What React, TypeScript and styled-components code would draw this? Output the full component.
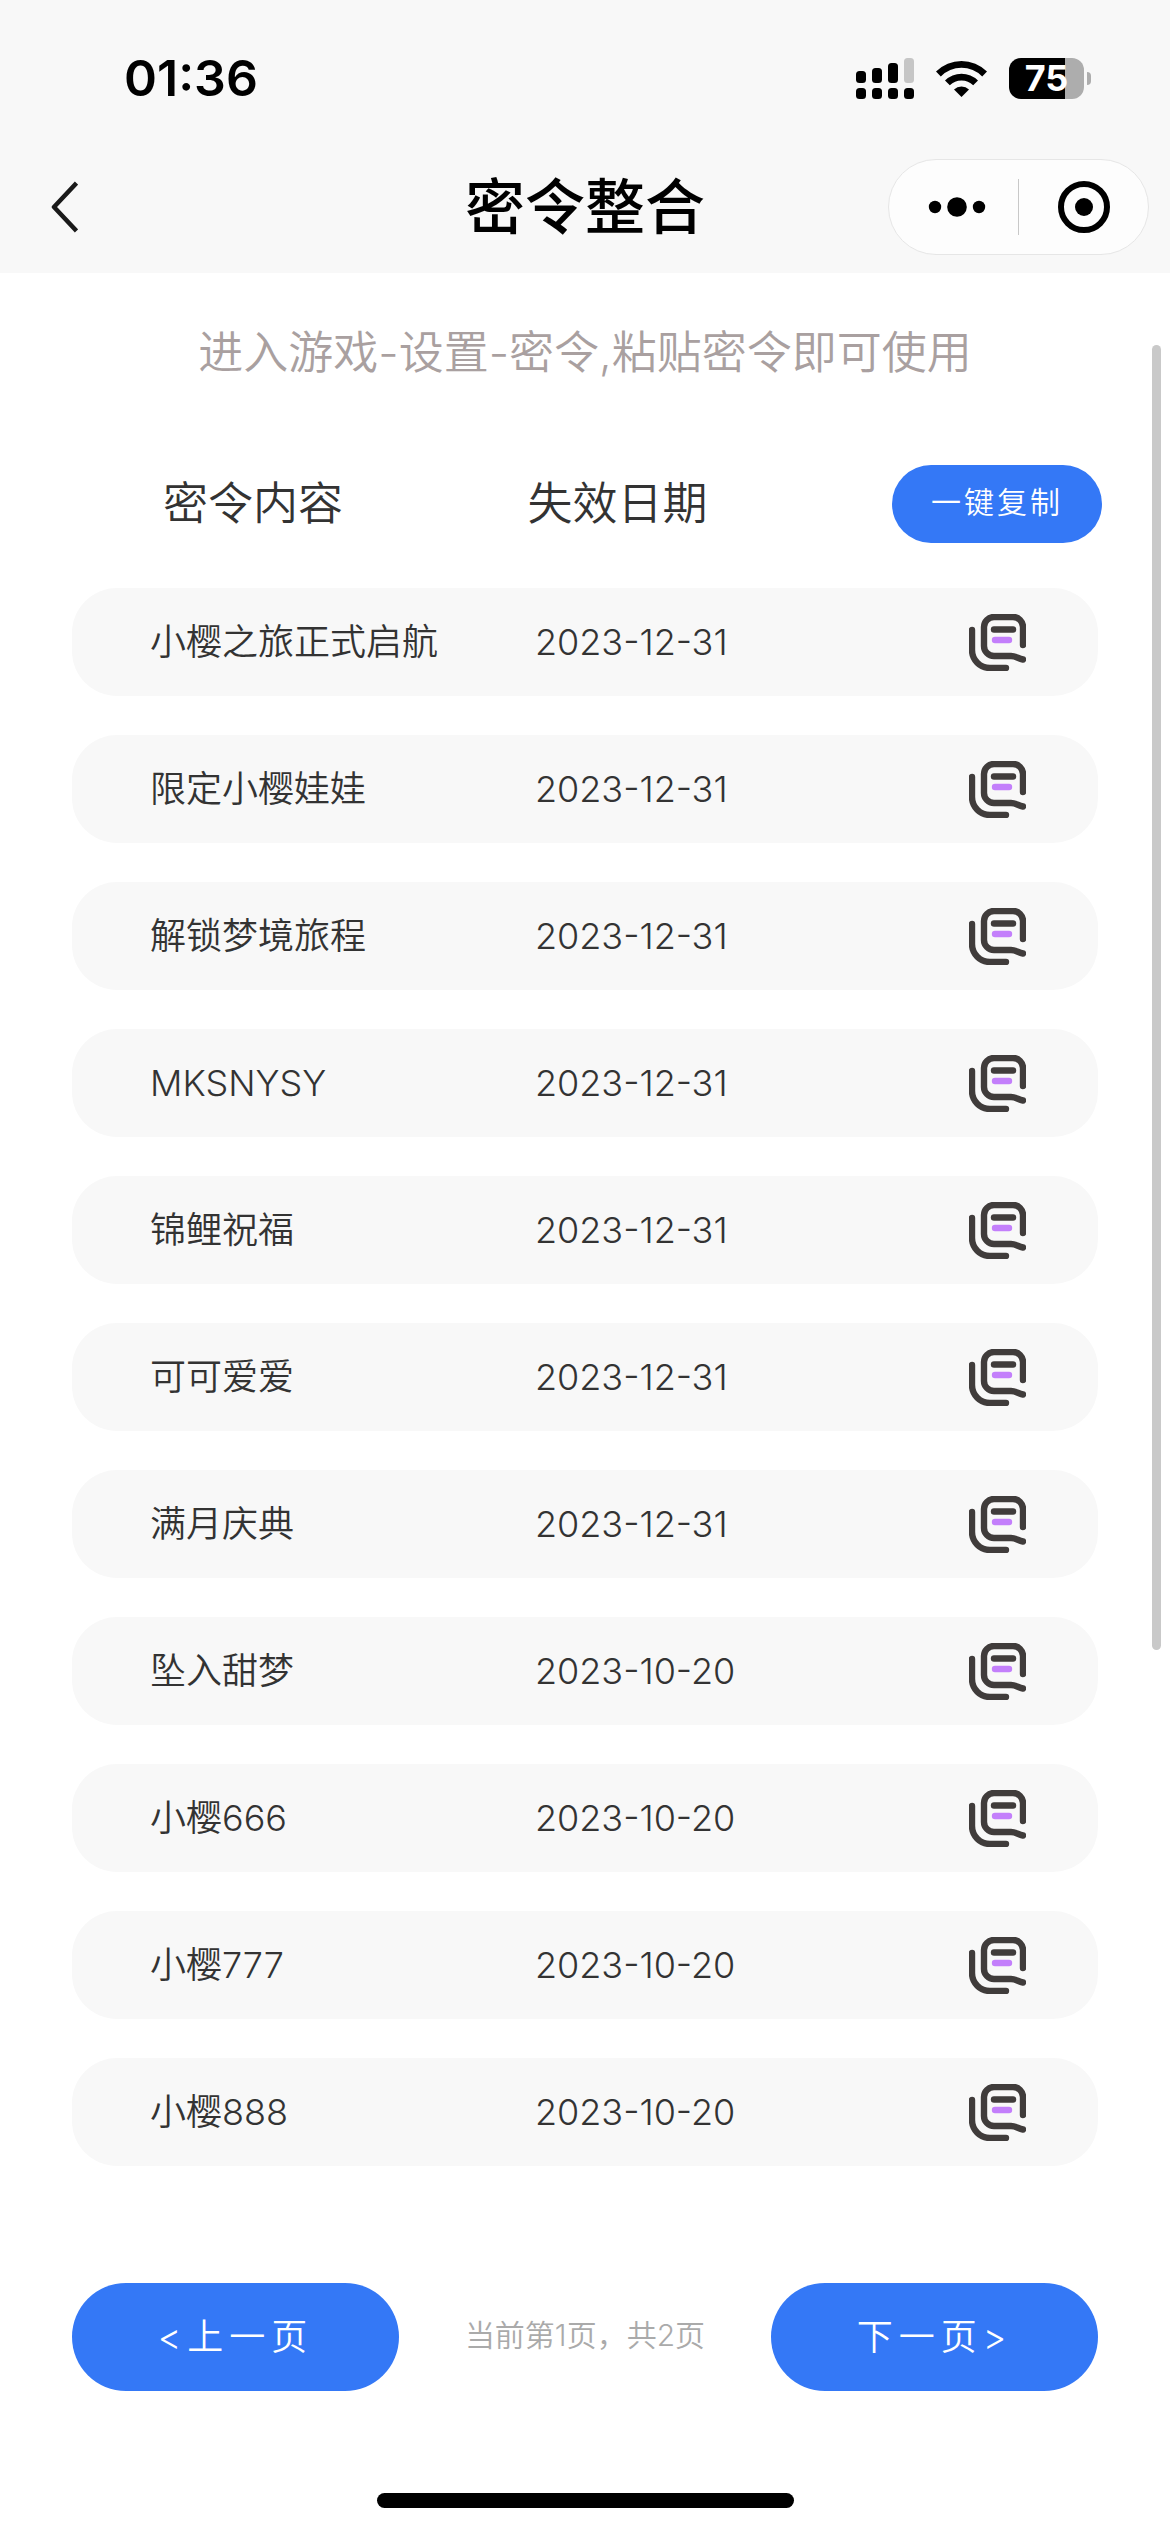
import React from "react";
import styled, { createGlobalStyle } from "styled-components";

const GlobalStyle = createGlobalStyle`
  *, *::before, *::after { box-sizing: border-box; }
  body {
    margin: 0;
    background: #fff;
    color: #333;
    font-family: Inter, "Noto Sans CJK SC", sans-serif;
    font-weight: 350;
  }
  button {
    border: 0;
    padding: 0;
    background: none;
    font: inherit;
    color: inherit;
    cursor: pointer;
  }
  svg { display: block; }
`;

const Page = styled.div`
  position: relative;
  display: flex;
  flex-direction: column;
  min-height: 100vh;
`;

const TopArea = styled.header`
  background: #f8f8f8;
  color: #000;
`;

const StatusBar = styled.div`
  display: flex;
  align-items: center;
  justify-content: space-between;
  height: 141px;
  padding: 15px 79px 0 124px;
`;

const Clock = styled.time`
  font-size: 50px;
  line-height: 60px;
  font-weight: 600;
`;

const StatusIcons = styled.div`
  display: flex;
  align-items: center;
  gap: 22px;
`;

const Battery = styled.div`
  display: flex;
  align-items: center;
  gap: 3px;
`;

const BatteryBody = styled.div`
  width: 75px;
  height: 41px;
  border-radius: 12px;
  background: linear-gradient(to right, #000 75%, #adadad 75%);
  color: #fff;
  font-size: 36px;
  line-height: 41px;
  font-weight: 700;
  text-align: center;
`;

const BatteryTip = styled.div`
  width: 4px;
  height: 13px;
  border-radius: 0 4px 4px 0;
  background: #adadad;
`;

const NavBar = styled.nav`
  display: grid;
  grid-template-columns: 1fr auto 1fr;
  align-items: center;
  height: 132px;
`;

const BackButton = styled.button`
  justify-self: start;
  padding: 18px 36px 18px 46px;
`;

const Title = styled.h1`
  margin: 0;
  font-size: 60px;
  line-height: 84px;
  font-weight: 500;
`;

const Capsule = styled.div`
  display: flex;
  align-items: center;
  justify-self: end;
  width: 261px;
  height: 96px;
  margin-right: 21px;
  border: 1px solid #e6e6e6;
  border-radius: 48px;
  background: #fdfdfd;
`;

const CapsuleButton = styled.button`
  display: flex;
  flex: 1 1 50%;
  align-items: center;
  justify-content: center;
  height: 100%;
  &:first-child { padding-left: 7px; }
`;

const CapsuleDivider = styled.span`
  flex: none;
  width: 1px;
  height: 56px;
  background: #c8c8c8;
`;

const Content = styled.main`
  display: flex;
  flex-direction: column;
  padding: 48px 72px 0;
`;

const Notice = styled.p`
  margin: 0 0 80px;
  color: #a9a0a0;
  font-size: 45px;
  line-height: 64px;
  text-align: center;
`;

const CodeTable = styled.table`
  display: block;
`;

const TableHead = styled.thead`
  display: block;
  margin: 0 -4px 45px 0;
`;

const HeadRow = styled.tr`
  display: grid;
  grid-template-columns: 1fr 1fr 210px;
  align-items: center;
  padding-left: 91px;
`;

const HeadCell = styled.th`
  padding: 0;
  font-size: 45px;
  line-height: 64px;
  font-weight: inherit;
  text-align: left;
`;

const TableBody = styled.tbody`
  display: flex;
  flex-direction: column;
  gap: 39px;
`;

const CodeRow = styled.tr`
  display: grid;
  grid-template-columns: 47fr 53fr 57px;
  align-items: center;
  height: 108px;
  padding: 0 72px 0 78px;
  border-radius: 45px;
  background: #f8f8f8;
`;

const Cell = styled.td`
  padding: 0;
  font-size: 36px;
  line-height: 54px;
`;

const CopyButton = styled.button`
  display: block;
`;

const PillButton = styled.button<{ $size: "small" | "large" }>`
  display: block;
  width: ${(p) => (p.$size === "large" ? 327 : 210)}px;
  height: ${(p) => (p.$size === "large" ? 108 : 78)}px;
  padding-bottom: ${(p) => (p.$size === "large" ? 6 : 4)}px;
  border-radius: 54px;
  background: #3478f6;
  color: #fff;
  font-size: ${(p) => (p.$size === "large" ? 36 : 30)}px;
  letter-spacing: ${(p) => (p.$size === "large" ? 6 : 3)}px;
`;

const Pager = styled.div`
  display: flex;
  align-items: center;
  justify-content: space-between;
  margin-top: 117px;
`;

const PagerInfo = styled.span`
  padding-bottom: 4px;
  color: #aaa;
  font-size: 30px;
  line-height: 44px;
`;

const ScrollThumb = styled.div`
  position: absolute;
  top: 345px;
  right: 9px;
  width: 9px;
  height: 1305px;
  border-radius: 5px;
  background: #c9c9c9;
`;

const HomeIndicator = styled.div`
  align-self: center;
  width: 417px;
  height: 15px;
  margin: 102px 0 24px;
  border-radius: 8px;
  background: #000;
`;

const codes = [
  { code: "小樱之旅正式启航", expires: "2023-12-31" },
  { code: "限定小樱娃娃", expires: "2023-12-31" },
  { code: "解锁梦境旅程", expires: "2023-12-31" },
  { code: "MKSNYSY", expires: "2023-12-31" },
  { code: "锦鲤祝福", expires: "2023-12-31" },
  { code: "可可爱爱", expires: "2023-12-31" },
  { code: "满月庆典", expires: "2023-12-31" },
  { code: "坠入甜梦", expires: "2023-10-20" },
  { code: "小樱666", expires: "2023-10-20" },
  { code: "小樱777", expires: "2023-10-20" },
  { code: "小樱888", expires: "2023-10-20" },
];

const SignalIcon = () => (
  <svg width="58" height="41" viewBox="0 0 58 41" aria-hidden="true">
    <rect x="0" y="13" width="10" height="12" rx="3.5" />
    <rect x="16" y="10" width="10" height="15" rx="3.5" />
    <rect x="32" y="5" width="10" height="20" rx="3.5" />
    <rect x="48" y="0" width="10" height="25" rx="3.5" fill="#c6c6c6" />
    {[0, 16, 32, 48].map((x) => (
      <rect key={x} x={x} y="30" width="10" height="11" rx="3.5" />
    ))}
  </svg>
);

const WifiIcon = () => (
  <svg width="51" height="37" viewBox="0 0 51 37" aria-hidden="true">
    <path d="M0 11.5A36 36 0 0 1 51 11.5L46.2 16.4A29.2 29.2 0 0 0 4.8 16.4Z" />
    <path d="M9 20.4A23.5 23.5 0 0 1 42 20.4L37.2 25.2A16.8 16.8 0 0 0 13.8 25.2Z" />
    <path d="M18 29.4A11 11 0 0 1 33 29.4L25.5 37Z" />
  </svg>
);

const BackIcon = () => (
  <svg width="32" height="52" viewBox="0 0 32 52" fill="none" stroke="#1a1a1a" strokeWidth="4.5" aria-hidden="true">
    <path d="M30.5 2L8 26L30.5 50" strokeLinejoin="round" />
  </svg>
);

const MoreIcon = () => (
  <svg width="58" height="20" viewBox="0 0 58 20" aria-hidden="true">
    <circle cx="7" cy="10" r="6.2" />
    <circle cx="29" cy="10" r="9.8" />
    <circle cx="51" cy="10" r="6.2" />
  </svg>
);

const TargetIcon = () => (
  <svg width="52" height="52" viewBox="0 0 52 52" aria-hidden="true">
    <circle cx="26" cy="26" r="23" fill="none" stroke="#000" strokeWidth="6" />
    <circle cx="26" cy="26" r="9" />
  </svg>
);

const CopyIcon = () => (
  <svg width="57" height="57" viewBox="0 0 57 57" fill="none" stroke="#403c3b" strokeWidth="6.4" strokeLinecap="round" aria-hidden="true">
    <path d="M3 16V36A18 18 0 0 0 21 54H37" />
    <path d="M54 31V13A10 10 0 0 0 44 3H25A10 10 0 0 0 15 13V32A10 10 0 0 0 25 42H42C47 42 49 44.5 54 45.5" />
    <path d="M25 15.5H44" />
    <path d="M26 26H40" stroke="#c37ffb" />
  </svg>
);

export default function App() {
  return (
    <Page>
      <GlobalStyle />
      <TopArea>
        <StatusBar>
          <Clock>01:36</Clock>
          <StatusIcons>
            <SignalIcon />
            <WifiIcon />
            <Battery>
              <BatteryBody>75</BatteryBody>
              <BatteryTip />
            </Battery>
          </StatusIcons>
        </StatusBar>
        <NavBar>
          <BackButton type="button" aria-label="返回">
            <BackIcon />
          </BackButton>
          <Title>密令整合</Title>
          <Capsule>
            <CapsuleButton type="button" aria-label="更多">
              <MoreIcon />
            </CapsuleButton>
            <CapsuleDivider />
            <CapsuleButton type="button" aria-label="关闭">
              <TargetIcon />
            </CapsuleButton>
          </Capsule>
        </NavBar>
      </TopArea>

      <Content>
        <Notice>进入游戏-设置-密令,粘贴密令即可使用</Notice>
        <CodeTable>
          <TableHead>
            <HeadRow>
              <HeadCell scope="col">密令内容</HeadCell>
              <HeadCell scope="col">失效日期</HeadCell>
              <Cell>
                <PillButton type="button" $size="small">一键复制</PillButton>
              </Cell>
            </HeadRow>
          </TableHead>
          <TableBody>
            {codes.map(({ code, expires }) => (
              <CodeRow key={code}>
                <Cell>{code}</Cell>
                <Cell>{expires}</Cell>
                <Cell>
                  <CopyButton type="button" aria-label={`复制 ${code}`}>
                    <CopyIcon />
                  </CopyButton>
                </Cell>
              </CodeRow>
            ))}
          </TableBody>
        </CodeTable>
        <Pager>
          <PillButton type="button" $size="large">&lt;上一页</PillButton>
          <PagerInfo>当前第1页，共2页</PagerInfo>
          <PillButton type="button" $size="large">下一页&gt;</PillButton>
        </Pager>
      </Content>
      <HomeIndicator />
      <ScrollThumb />
    </Page>
  );
}
